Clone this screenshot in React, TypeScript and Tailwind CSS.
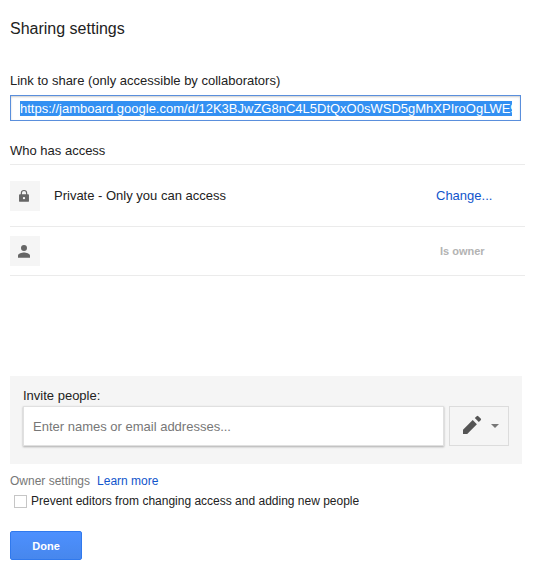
import { useEffect, useRef, useState } from 'react';

const SHARE_URL = 'https://jamboard.google.com/d/12K3BJwZG8nC4L5DtQxO0sWSD5gMhXPIroOgLWE9';

const LockIcon = () => (
  <svg viewBox="0 0 24 24" className="w-[14px] h-[14px]" fill="#666" aria-hidden="true">
    <path d="M19 9h-1.500V7a5.500 5.500 0 0 0-11 0v2H5a1.500 1.500 0 0 0-1.500 1.500v10A1.500 1.500 0 0 0 5 22h14a1.500 1.500 0 0 0 1.500-1.500v-10A1.500 1.500 0 0 0 19 9zm-7 8.500a2 2 0 1 1 0-4 2 2 0 0 1 0 4zM15.500 9h-7V7a3.500 3.500 0 0 1 7 0z" />
  </svg>
);

const PersonIcon = () => (
  <svg viewBox="0 0 24 24" className="w-[18px] h-[18px]" fill="#666" aria-hidden="true">
    <path d="M12 12a4 4 0 1 0 0-8 4 4 0 0 0 0 8zm0 2c-2.670 0-8 1.340-8 4v3h16v-3c0-2.660-5.330-4-8-4z" />
  </svg>
);

const PencilIcon = () => (
  <svg viewBox="0 0 24 24" className="w-6 h-6" fill="#555" aria-hidden="true">
    <path d="M3 15.800V20h4.200l9.700-9.700-4.200-4.200L3 15.800zM20.700 6.200a1.100 1.100 0 0 0 0-1.600l-2.400-2.400a1.100 1.100 0 0 0-1.600 0l-1.900 1.900 4 4 1.900-1.900z" />
  </svg>
);

export default function App() {
  const linkRef = useRef<HTMLInputElement>(null);
  const [invitees, setInvitees] = useState('');
  const [locked, setLocked] = useState(false);

  // The link is ready to copy as soon as the dialog opens
  useEffect(() => {
    const input = linkRef.current;
    if (!input) return;
    input.focus();
    input.setSelectionRange(0, input.value.length, 'backward');
    input.scrollLeft = 0;
  }, []);

  return (
    <main className="bg-white px-[10px] pt-[17px] pb-2 font-['Liberation_Sans',Arial,sans-serif] text-[13px] leading-4 text-[#222]">
      <h1 className="text-base leading-6">Sharing settings</h1>

      {/* Link */}
      <div className="mt-8 mr-1">
        <label htmlFor="link">Link to share (only accessible by collaborators)</label>
        <input
          id="link"
          ref={linkRef}
          readOnly
          value={SHARE_URL}
          className="block w-full h-[26px] mt-[6px] pl-[9px] pr-2 border border-[#5a8fdc] bg-white text-[13px] outline-none shadow-[inset_0_1px_2px_rgba(0,0,0,0.2)] selection:bg-[#3390f2] selection:text-white"
        />
      </div>

      {/* Access list */}
      <section>
        <h2 className="mt-[22px] pb-[5px] border-b border-[#ebebeb]">Who has access</h2>
        <ul>
          <li className="flex items-center h-[62px] border-b border-[#ebebeb]">
            <span className="flex items-center justify-center w-[30px] h-[30px] pr-[2px] bg-[#f5f5f5]">
              <LockIcon />
            </span>
            <span className="flex-1 ml-[14px]">Private - Only you can access</span>
            <a href="#change" className="w-[89px] text-[#15c] hover:underline">Change...</a>
          </li>
          <li className="flex items-center h-[49px] border-b border-[#ebebeb]">
            <span className="flex items-center justify-center w-[30px] h-[30px] pr-[2px] bg-[#f5f5f5]">
              <PersonIcon />
            </span>
            <span className="flex-1" />
            <span className="w-[89px] pl-1 text-[11px] font-bold text-[#b3b3b3]">Is owner</span>
          </li>
        </ul>
      </section>

      {/* Invite */}
      <section className="mt-[100px] mr-[3px] px-[13px] pt-3 pb-[18px] bg-[#f5f5f5]">
        <label htmlFor="invite">Invite people:</label>
        <div className="flex gap-[5px] mt-[2px]">
          <input
            id="invite"
            value={invitees}
            onChange={(e) => setInvitees(e.target.value)}
            placeholder="Enter names or email addresses..."
            className="flex-1 min-w-0 h-10 px-[9px] border border-[#e0e0e0] bg-white outline-none shadow-[0_1px_2px_rgba(0,0,0,0.3)] placeholder:text-[#777]"
          />
          <button
            type="button"
            aria-label="Can edit"
            aria-haspopup="menu"
            className="flex items-center justify-center gap-[7px] w-[60px] h-10 border border-[#dcdcdc] bg-[#f5f5f5]"
          >
            <PencilIcon />
            <svg viewBox="0 0 8 4" className="w-2 h-1" fill="#777" aria-hidden="true">
              <path d="M0 0h8L4 4z" />
            </svg>
          </button>
        </div>
      </section>

      {/* Owner settings */}
      <section className="mt-[9px] text-xs">
        <h2 className="inline text-[#777]">Owner settings</h2>
        <a href="#learn-more" className="ml-[7px] text-[#15c] hover:underline">Learn more</a>
        <label className="flex items-center gap-1 mt-1 ml-1 text-[#222]">
          <input
            type="checkbox"
            checked={locked}
            onChange={(e) => setLocked(e.target.checked)}
            className="appearance-none w-[13px] h-[13px] border border-[#c6c6c6] bg-white checked:bg-[#4d90fe]"
          />
          Prevent editors from changing access and adding new people
        </label>
      </section>

      <button
        type="button"
        className="mt-[22px] w-[72px] h-[29px] rounded-xs border border-[#3079ed] bg-linear-to-b from-[#4d90fe] to-[#4787ed] text-[11px] font-bold text-white"
      >
        Done
      </button>
    </main>
  );
}
